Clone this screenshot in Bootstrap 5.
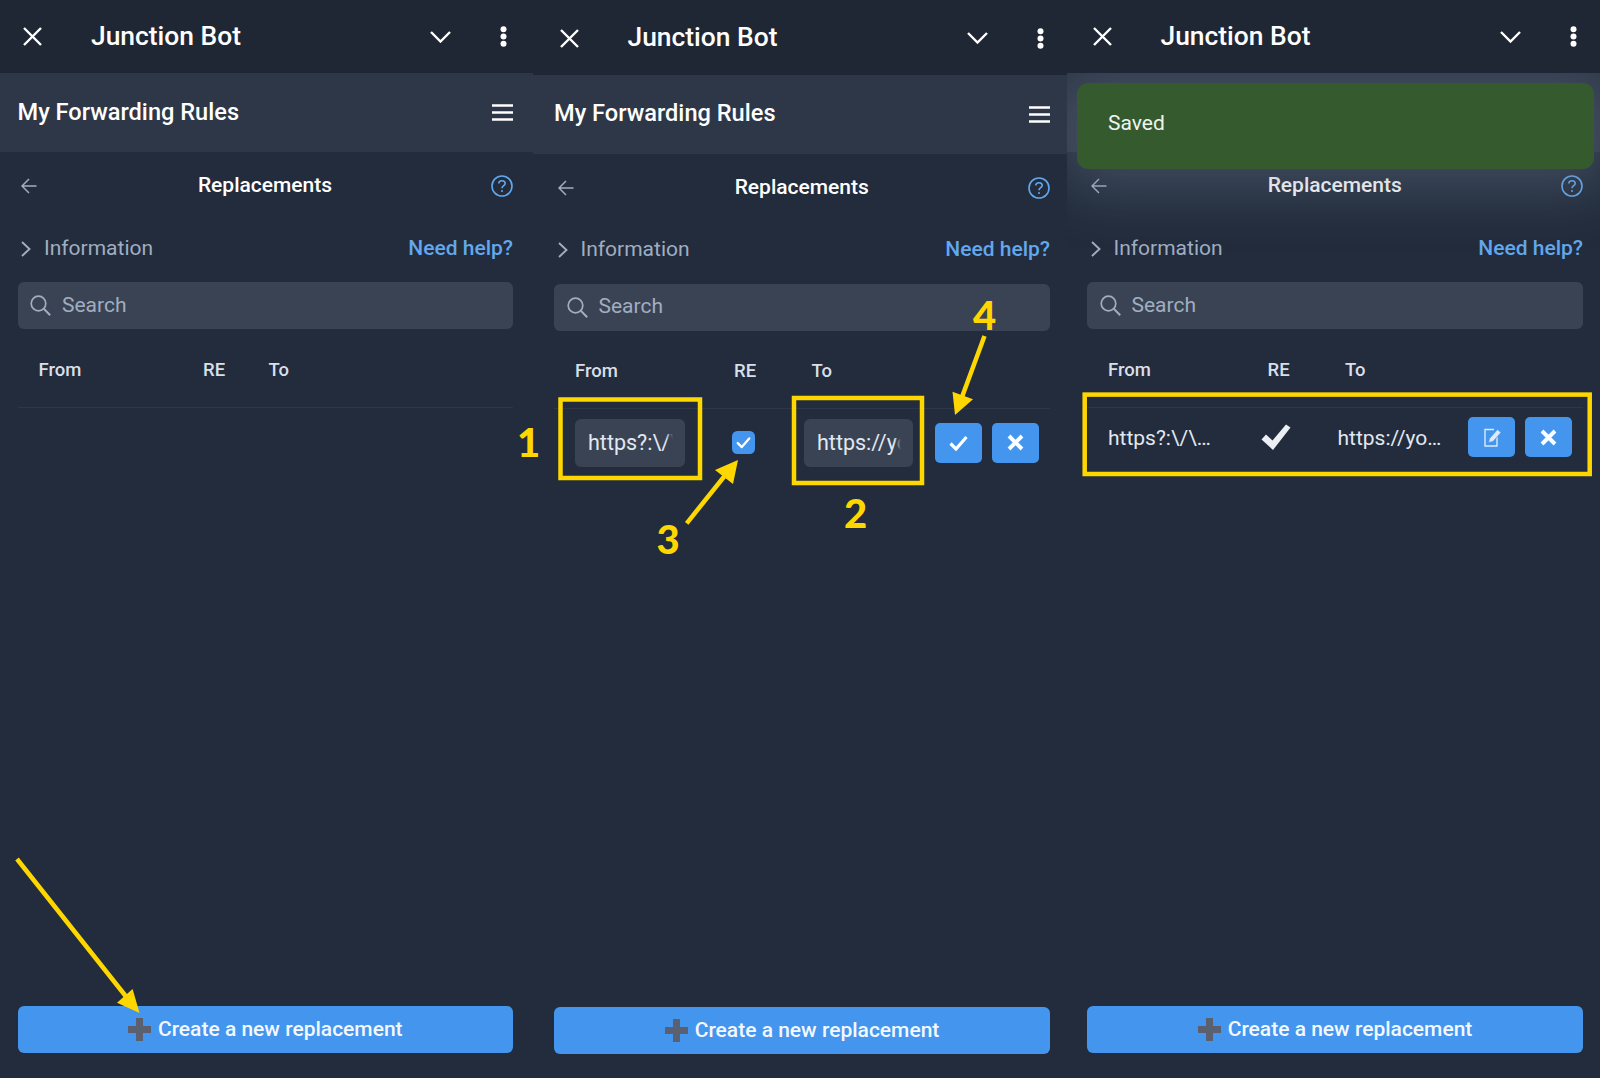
<!DOCTYPE html>
<html lang="en">
<head>
  <meta charset="UTF-8" />
  <title>Junction Bot - Replacements</title>
  <link href="https://cdn.jsdelivr.net/npm/bootstrap@5.3.0/dist/css/bootstrap.min.css" rel="stylesheet" />
  <style>
    body { background: #222c3c; font-family: Roboto, "Liberation Sans", sans-serif; overflow: hidden; }
    .shot { width: 1600px; height: 1078px; }
    .phone { height: 1078px; background: #222c3c; flex: none; --pl: 17.5px; --pr: 17px; }
    .phone-a { width: 533px; --pr: 20px; }
    .phone-b { width: 533.5px; --pl: 21px; --pr: 16.5px; padding-top: 1.5px; }
    .phone-c { width: 533.5px; --pl: 20.5px; }
    .phone-b .top-head { margin-top: -1.5px; height: 74.5px; padding-top: 1.5px; }
    .top-head { height: 73px; background: #202734; color: #fff; padding-left: calc(var(--pl) + 5.5px); padding-right: calc(var(--pr) + 6.5px); }
    .top-title { font-size: 26.4px; font-weight: 500; margin-left: 49px; }
    .top-chev { margin-right: 48.5px; }
    .rules-bar { height: 79px; background: #2d3748; color: #fff; padding-left: var(--pl); padding-right: var(--pr); }
    .rules-title { font-size: 23.6px; font-weight: 500; }
    .sub-head { height: 65px; padding-left: calc(var(--pl) + 3.5px); padding-right: var(--pr); padding-top: 3px; }
    .sub-title { font-size: 21px; font-weight: 500; color: #fff; margin-left: 2px; }
    .info-row { height: 65px; padding-left: calc(var(--pl) + 3.5px); padding-right: var(--pr); padding-bottom: 2px; font-size: 21px; }
    .info-txt { color: #a0aec0; margin-left: 13px; }
    .need-help { color: #63a7ec; font-weight: 500; text-decoration: none; }
    .search-wrap { margin-left: var(--pl); margin-right: var(--pr); height: 47px; background: #3a4354; border-radius: 6px; padding-left: 12.5px; color: #a0aec0; }
    .search-input { background: transparent; border: 0; outline: 0; padding: 0; margin-left: 11px; font-size: 21px; color: #a0aec0; width: 80%; }
    .search-input::placeholder { color: #a0aec0; opacity: 1; }
    .rule-table { margin-left: var(--pl); width: calc(100% - var(--pl) - var(--pr)); table-layout: fixed; color: #e2e8f0; font-size: 18.5px; }
    .rule-table th { font-weight: 500; padding: 0; height: 78px; padding-top: 6px; border-bottom: 1.5px solid #2d3748; vertical-align: middle; color: #d8dfe8; }
    .rule-table th:first-child, .rule-table td:first-child { padding-left: 21px; }
    .rule-table th:nth-child(3) { padding-left: 7.5px; }
    .rule-table td { padding: 0; vertical-align: middle; font-size: 21px; }
    .col-from-a { width: 185.5px; } .col-re-a { width: 58px; }
    .col-from-b { width: 180px; } .col-re-b { width: 70px; }
    .col-from-c { width: 180.5px; } .col-re-c { width: 70px; }
    .row-edit td { height: 68px; }
    .row-saved td { height: 60px; }
    .fade-field { width: 110px; position: relative; }
    .fade-field.to-field { width: 109px; }
    .fade-field::after { content: ""; position: absolute; right: 12px; top: 4px; bottom: 4px; width: 7px; background: linear-gradient(to right, rgba(58,67,84,0), #3a4354); }
    .cell-input { width: 100%; height: 48px; background: #3a4354; border: 0; border-radius: 6px; color: #e2e8f0; font-size: 21.5px; padding: 0 12px 0 13px; }
    .cell-input:focus { background: #3a4354; color: #e2e8f0; box-shadow: none; }
    .re-check { width: 23px; height: 23px; margin: 0 0 0 -2px; background-color: #4395ee; border: 0; border-radius: 4px; display: block; }
    .re-check:checked { background-color: #4395ee; background-image: url("data:image/svg+xml,%3csvg xmlns='http://www.w3.org/2000/svg' viewBox='0 0 20 20'%3e%3cpath fill='none' stroke='%23fff' stroke-linecap='round' stroke-linejoin='round' stroke-width='2' d='m5 10.5 3.5 3.5 6.5-7.5'/%3e%3c/svg%3e"); }
    .row-text { white-space: nowrap; color: #e2e8f0; margin-top: 2px; font-size: 21px; }
    .big-tick { margin-left: -7px; display: block; }
    .act-group { padding-right: 11px; gap: 10px; }
    .act-btn { width: 47px; height: 40px; padding: 0; background: #4395ee; border: 0; border-radius: 5px; color: #fff; }
    .act-btn:hover { background: #4395ee; color: #fff; }
    .create-btn { margin: auto var(--pr) 25px var(--pl); height: 47px; background: #4395ee; border: 0; border-radius: 6px; color: #f3f8ff; font-size: 21px; font-weight: 500; padding: 0; gap: 7px; }
    .create-btn:hover { background: #4395ee; color: #f3f8ff; }
    .phone-b .create-btn { margin-bottom: 24px; }
    .toast-clip { left: 0; right: 0; top: 73px; bottom: 0; overflow: hidden; pointer-events: none; }
    .saved-toast { left: 10px; top: 10px; width: 517.5px; height: 86px; background: #345a2e; border-radius: 11px; color: #f0f4ef; font-size: 21px; padding-left: 31.5px; padding-bottom: 4px; box-shadow: 0 8px 56px 12px rgba(113,128,150,.38); }
    .notes { left: 0; top: 0; pointer-events: none; }
    .notes text { font-family: Lato, "Open Sans", sans-serif; font-weight: 900; font-size: 40px; fill: #ffd700; text-anchor: middle; dominant-baseline: central; }
  </style>
</head>
<body>
  <svg width="0" height="0" class="position-absolute">
    <symbol id="i-close" viewBox="0 0 19 19"><path d="M1 1L18 18M18 1L1 18" stroke="#fff" stroke-width="2.4" fill="none" /></symbol>
    <symbol id="i-down" viewBox="0 0 21 12"><path d="M1 1L10.5 10.5L20 1" stroke="#fff" stroke-width="2.4" fill="none" /></symbol>
    <symbol id="i-dots" viewBox="0 0 7 21"><circle cx="3.5" cy="3.2" r="3" fill="#fff" /><circle cx="3.5" cy="10.5" r="3" fill="#fff" /><circle cx="3.5" cy="17.8" r="3" fill="#fff" /></symbol>
    <symbol id="i-menu" viewBox="0 0 21 17"><path d="M0 1.5H21M0 8.5H21M0 15.5H21" stroke="#fff" stroke-width="2.6" fill="none" /></symbol>
    <symbol id="i-back" viewBox="0 0 16 16"><path d="M15.5 8H1.5M8 1L1 8L8 15" stroke="#a0aec0" stroke-width="1.5" fill="none" /></symbol>
    <symbol id="i-help" viewBox="0 0 22 22"><circle cx="11" cy="11" r="10" stroke="#63a7ec" stroke-width="1.6" fill="none" /><path d="M7.8 8.6C7.8 6.8 9.2 5.8 11 5.8C12.8 5.8 14.2 6.9 14.2 8.5C14.2 10.6 11 10.8 11 13.2" stroke="#63a7ec" stroke-width="1.6" fill="none" /><circle cx="11" cy="16" r="1" fill="#63a7ec" /></symbol>
    <symbol id="i-right" viewBox="0 0 10 16"><path d="M1 1L8.5 8L1 15" stroke="#a0aec0" stroke-width="1.9" fill="none" /></symbol>
    <symbol id="i-search" viewBox="0 0 21 21"><circle cx="8.5" cy="8.5" r="7.3" stroke="#a0aec0" stroke-width="1.7" fill="none" /><path d="M13.8 13.8L20.2 20.2" stroke="#a0aec0" stroke-width="2" fill="none" /></symbol>
    <symbol id="i-plus" viewBox="0 0 23 23"><path d="M8 0H15V8H23V15H15V23H8V15H0V8H8Z" fill="#5a6070" /></symbol>
    <symbol id="i-tick" viewBox="0 0 19 16"><path d="M1.5 8.5L7 14L17.5 2" stroke="#fff" stroke-width="3.2" fill="none" /></symbol>
    <symbol id="i-cross" viewBox="0 0 17 17"><path d="M2 2L15 15M15 2L2 15" stroke="#fff" stroke-width="3.9" fill="none" /></symbol>
    <symbol id="i-edit" viewBox="0 0 20 20"><path d="M12 2.5H3V19H15V9.5" stroke="#dceafb" stroke-width="1.4" fill="none" /><path d="M6.5 15.5L7.5 11.5L15.5 2.5L19 5.5L11 14.5Z" fill="#dceafb" stroke="#4395ee" stroke-width=".7" /></symbol>
    <symbol id="i-bigtick" viewBox="0 0 30 26"><path d="M0.5 15.5L5 10.5L11.5 16.5L25 0.5L29.5 3.5L12 26Z" fill="#eceff3" /></symbol>
  </svg>

  <div class="shot d-flex position-relative">
    <!-- first phone: empty list -->
    <section class="phone phone-a d-flex flex-column">
      <header class="top-head d-flex align-items-center">
        <svg width="19" height="19"><use href="#i-close" /></svg>
        <span class="top-title">Junction Bot</span>
        <svg class="ms-auto top-chev" width="21" height="12"><use href="#i-down" /></svg>
        <svg width="7" height="21"><use href="#i-dots" /></svg>
      </header>
      <div class="rules-bar d-flex align-items-center justify-content-between">
        <span class="rules-title">My Forwarding Rules</span>
        <svg width="21" height="17"><use href="#i-menu" /></svg>
      </div>
      <div class="sub-head d-flex align-items-center justify-content-between">
        <svg width="16" height="16"><use href="#i-back" /></svg>
        <span class="sub-title">Replacements</span>
        <svg width="22" height="22"><use href="#i-help" /></svg>
      </div>
      <div class="info-row d-flex align-items-center">
        <svg width="10" height="16"><use href="#i-right" /></svg>
        <span class="info-txt">Information</span>
        <a class="need-help ms-auto" href="#">Need help?</a>
      </div>
      <div class="search-wrap d-flex align-items-center">
        <svg width="21" height="21"><use href="#i-search" /></svg>
        <input class="search-input" type="text" placeholder="Search" />
      </div>
      <table class="rule-table">
        <colgroup><col class="col-from-a" /><col class="col-re-a" /><col /></colgroup>
        <thead><tr><th>From</th><th>RE</th><th>To</th></tr></thead>
      </table>
      <button class="btn create-btn d-flex align-items-center justify-content-center" type="button">
        <svg width="23" height="23"><use href="#i-plus" /></svg>Create a new replacement
      </button>
    </section>

    <!-- second phone: editing a row -->
    <section class="phone phone-b d-flex flex-column">
      <header class="top-head d-flex align-items-center">
        <svg width="19" height="19"><use href="#i-close" /></svg>
        <span class="top-title">Junction Bot</span>
        <svg class="ms-auto top-chev" width="21" height="12"><use href="#i-down" /></svg>
        <svg width="7" height="21"><use href="#i-dots" /></svg>
      </header>
      <div class="rules-bar d-flex align-items-center justify-content-between">
        <span class="rules-title">My Forwarding Rules</span>
        <svg width="21" height="17"><use href="#i-menu" /></svg>
      </div>
      <div class="sub-head d-flex align-items-center justify-content-between">
        <svg width="16" height="16"><use href="#i-back" /></svg>
        <span class="sub-title">Replacements</span>
        <svg width="22" height="22"><use href="#i-help" /></svg>
      </div>
      <div class="info-row d-flex align-items-center">
        <svg width="10" height="16"><use href="#i-right" /></svg>
        <span class="info-txt">Information</span>
        <a class="need-help ms-auto" href="#">Need help?</a>
      </div>
      <div class="search-wrap d-flex align-items-center">
        <svg width="21" height="21"><use href="#i-search" /></svg>
        <input class="search-input" type="text" placeholder="Search" />
      </div>
      <table class="rule-table">
        <colgroup><col class="col-from-b" /><col class="col-re-b" /><col /><col /></colgroup>
        <thead><tr><th>From</th><th>RE</th><th>To</th><th></th></tr></thead>
        <tbody>
          <tr class="row-edit">
            <td><div class="fade-field"><input class="form-control cell-input" type="text" value="https?:\/\/youtu" /></div></td>
            <td><input class="form-check-input re-check" type="checkbox" checked /></td>
            <td><div class="fade-field to-field"><input class="form-control cell-input" type="text" value="https://youtube" /></div></td>
            <td><div class="d-flex act-group justify-content-end">
              <button class="btn act-btn d-flex align-items-center justify-content-center" type="button"><svg width="19" height="16"><use href="#i-tick" /></svg></button>
              <button class="btn act-btn d-flex align-items-center justify-content-center" type="button"><svg width="17" height="17"><use href="#i-cross" /></svg></button>
            </div></td>
          </tr>
        </tbody>
      </table>
      <button class="btn create-btn d-flex align-items-center justify-content-center" type="button">
        <svg width="23" height="23"><use href="#i-plus" /></svg>Create a new replacement
      </button>
    </section>

    <!-- third phone: row saved, toast covers the rules bar -->
    <section class="phone phone-c d-flex flex-column position-relative">
      <header class="top-head d-flex align-items-center">
        <svg width="19" height="19"><use href="#i-close" /></svg>
        <span class="top-title">Junction Bot</span>
        <svg class="ms-auto top-chev" width="21" height="12"><use href="#i-down" /></svg>
        <svg width="7" height="21"><use href="#i-dots" /></svg>
      </header>
      <div class="rules-bar"></div>
      <div class="sub-head d-flex align-items-center justify-content-between">
        <svg width="16" height="16"><use href="#i-back" /></svg>
        <span class="sub-title">Replacements</span>
        <svg width="22" height="22"><use href="#i-help" /></svg>
      </div>
      <div class="info-row d-flex align-items-center">
        <svg width="10" height="16"><use href="#i-right" /></svg>
        <span class="info-txt">Information</span>
        <a class="need-help ms-auto" href="#">Need help?</a>
      </div>
      <div class="search-wrap d-flex align-items-center">
        <svg width="21" height="21"><use href="#i-search" /></svg>
        <input class="search-input" type="text" placeholder="Search" />
      </div>
      <table class="rule-table">
        <colgroup><col class="col-from-c" /><col class="col-re-c" /><col /><col /></colgroup>
        <thead><tr><th>From</th><th>RE</th><th>To</th><th></th></tr></thead>
        <tbody>
          <tr class="row-saved">
            <td><div class="row-text">https?:\/\…</div></td>
            <td><svg class="big-tick" width="30" height="26"><use href="#i-bigtick" /></svg></td>
            <td><div class="row-text">https://yo…</div></td>
            <td><div class="d-flex act-group justify-content-end">
              <button class="btn act-btn d-flex align-items-center justify-content-center" type="button"><svg width="20" height="20"><use href="#i-edit" /></svg></button>
              <button class="btn act-btn d-flex align-items-center justify-content-center" type="button"><svg width="17" height="17"><use href="#i-cross" /></svg></button>
            </div></td>
          </tr>
        </tbody>
      </table>
      <button class="btn create-btn d-flex align-items-center justify-content-center" type="button">
        <svg width="23" height="23"><use href="#i-plus" /></svg>Create a new replacement
      </button>
      <div class="toast-clip position-absolute">
        <div class="saved-toast position-absolute d-flex align-items-center">Saved</div>
      </div>
    </section>

    <!-- yellow callouts drawn on top of the screenshots -->
    <svg class="notes position-absolute" width="1600" height="1078">
      <g fill="none" stroke="#ffd700" stroke-width="4.5">
        <rect x="560.5" y="399.5" width="139.5" height="78.5" />
        <rect x="794" y="398" width="128" height="85" />
        <rect x="1084.7" y="394.6" width="505" height="79.4" />
        <path d="M17 859L128 999M686.7 523.3L727 473M984.5 336L962 397" />
      </g>
      <g fill="#ffd700">
        <path d="M139.5 1013L132.6 989L117 1002.7Z" />
        <path d="M738 460L715 470L733 484Z" />
        <path d="M955 415L952.5 391.7L973 399.3Z" />
      </g>
      <text x="528.5" y="442">1</text>
      <text x="855.5" y="513">2</text>
      <text x="668" y="539">3</text>
      <text x="984.5" y="314.5">4</text>
    </svg>
  </div>
  <script src="https://cdn.jsdelivr.net/npm/bootstrap@5.3.0/dist/js/bootstrap.bundle.min.js"></script>
</body>
</html>
